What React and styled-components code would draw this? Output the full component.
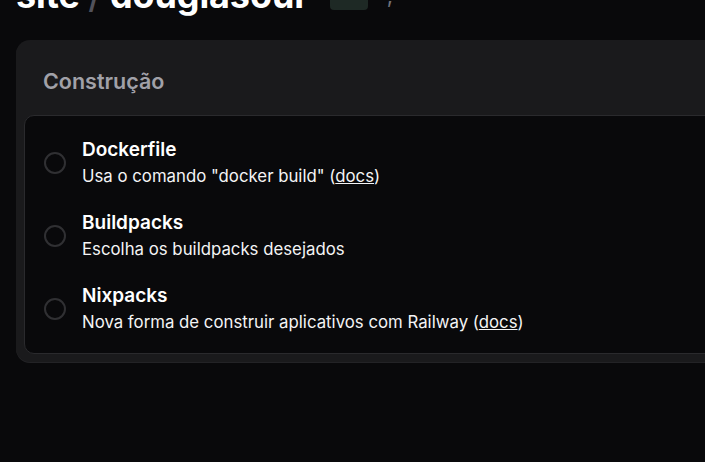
import React from 'react'
import styled, { createGlobalStyle } from 'styled-components'

const GlobalStyle = createGlobalStyle`
  html, body {
    margin: 0;
    padding: 0;
    background: #09090b;
    font-family: Inter, "Noto Sans", sans-serif;
    color: #fafafa;
    overflow: hidden;
  }
`

const Page = styled.div`
  width: 705px;
  height: 462px;
  overflow: hidden;
  padding-left: 16px;
  box-sizing: border-box;
`

const TitleRow = styled.div`
  display: flex;
  align-items: center;
  gap: 21px;
  margin-top: -25px;
  height: 40px;
  margin-bottom: 25px;
`

const Title = styled.h1`
  margin: 0;
  font-size: 36px;
  line-height: 40px;
  font-weight: 700;
  letter-spacing: -0.1px;
  white-space: nowrap;
  color: #ffffff;
  span {
    color: #52525b;
    font-weight: 500;
  }
`

const Badge = styled.div`
  width: 38px;
  height: 30px;
  border-radius: 4px;
  background: #1e2925;
`

const Tick = styled.span`
  color: #71717a;
  font-size: 22px;
  margin-left: -2px;
`

const Card = styled.section`
  width: 760px;
  background: #1a1a1c;
  border-radius: 14px;
  box-shadow: 0 1px 0 #232326;
  padding: 29px 0 8px 8px;
  box-sizing: border-box;
`

const Heading = styled.h2`
  margin: 0 0 22px 19px;
  font-size: 21.5px;
  line-height: 24px;
  font-weight: 600;
  color: #a1a1a8;
`

const OptionList = styled.div`
  background: #09090b;
  border: 1px solid #2a2a2d;
  border-radius: 10px;
  padding: 9px 0;
`

const Option = styled.label`
  display: flex;
  align-items: center;
  gap: 16px;
  padding: 13px 19px 8px;
  cursor: pointer;
`

const Radio = styled.span`
  width: 22px;
  height: 22px;
  box-sizing: border-box;
  border-radius: 50%;
  border: 2px solid #303033;
  flex-shrink: 0;
  margin-top: -2px;
`

const OptionText = styled.div`
  display: flex;
  flex-direction: column;
`

const OptionTitle = styled.div`
  font-size: 19px;
  line-height: 24px;
  font-weight: 600;
  color: #ffffff;
`

const OptionDesc = styled.div`
  font-size: 16.8px;
  line-height: 28px;
  color: #f4f4f5;
  a {
    color: inherit;
    text-decoration: underline;
  }
`

const options = [
  { title: 'Dockerfile', desc: 'Usa o comando "docker build"', docs: true },
  { title: 'Buildpacks', desc: 'Escolha os buildpacks desejados', docs: false },
  { title: 'Nixpacks', desc: 'Nova forma de construir aplicativos com Railway', docs: true },
]

export default function App() {
  return (
    <>
      <GlobalStyle />
      <Page>
        <TitleRow>
          <Title>site <span>/</span> douglasour</Title>
          <Badge />
          <Tick>,</Tick>
        </TitleRow>
        <Card>
          <Heading>Construção</Heading>
          <OptionList>
            {options.map((o) => (
              <Option key={o.title}>
                <Radio />
                <OptionText>
                  <OptionTitle>{o.title}</OptionTitle>
                  <OptionDesc>
                    {o.desc}
                    {o.docs && (
                      <> (<a href="#">docs</a>)</>
                    )}
                  </OptionDesc>
                </OptionText>
              </Option>
            ))}
          </OptionList>
        </Card>
      </Page>
    </>
  )
}
